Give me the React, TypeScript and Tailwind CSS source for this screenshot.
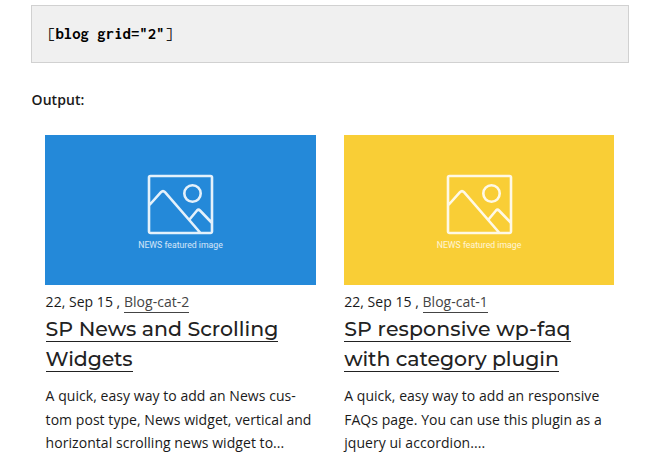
type Line = { text: string; tracking: string };

type Post = {
  background: string;
  width: string;
  indent: string;
  category: string;
  title: Line[];
  excerpt: Line[];
};

const posts: Post[] = [
  {
    background: "bg-[#2489d9]",
    width: "w-[271px]",
    indent: "pl-[0.6px]",
    category: "Blog-cat-2",
    title: [
      { text: "SP News and Scrolling", tracking: "tracking-[0px]" },
      { text: "Widgets", tracking: "tracking-[-0.15px]" },
    ],
    excerpt: [
      { text: "A quick, easy way to add an News cus-", tracking: "tracking-[0.05px]" },
      { text: "tom post type, News widget, vertical and", tracking: "tracking-[0.05px]" },
      { text: "horizontal scrolling news widget to...", tracking: "tracking-[0.05px]" },
    ],
  },
  {
    background: "bg-[#f9ce36]",
    width: "w-[270px]",
    indent: "pl-[0.2px]",
    category: "Blog-cat-1",
    title: [
      { text: "SP responsive wp-faq", tracking: "tracking-[0.13px]" },
      { text: "with category plugin", tracking: "tracking-[-0.1px]" },
    ],
    excerpt: [
      { text: "A quick, easy way to add an responsive", tracking: "tracking-[0.05px]" },
      { text: "FAQs page. You can use this plugin as a", tracking: "tracking-[0.05px]" },
      { text: "jquery ui accordion....", tracking: "tracking-[0.05px]" },
    ],
  },
];

function FeaturedImage({ background }: { background: string }) {
  return (
    <div className={`flex h-[150px] flex-col items-center pt-[39px] ${background}`}>
      <svg
        className="h-[62px] w-[67px] shrink-0"
        viewBox="0 0 67 62"
        fill="none"
        stroke="white"
        strokeOpacity="0.88"
        strokeWidth="2.6"
        strokeLinejoin="round"
      >
        <path d="M3.5 2H63.5a1.5 1.5 0 0 1 1.5 1.5V57.5a1.5 1.5 0 0 1-1.5 1.5H3.5A1.5 1.5 0 0 1 2 57.5V3.5A1.5 1.5 0 0 1 3.5 2ZM2 31.5 14 18.2Q16 16 18 18.2L53.5 59M42.5 45.5 50 36.5Q51.5 35 53 36.5L65 49" />
        <circle cx="45.5" cy="19.5" r="8.2" />
      </svg>
      <span className="mt-[2px] font-['Roboto',sans-serif] text-[8.7px] leading-[14px] whitespace-nowrap text-white/80">
        NEWS featured image
      </span>
    </div>
  );
}

function PostCard({ post }: { post: Post }) {
  return (
    <article className={post.width}>
      <FeaturedImage background={post.background} />
      <div className={`mt-[7px] flex h-[20px] text-[14px] leading-[20px] tracking-[0.03px] whitespace-pre text-[#1a1a1a] ${post.indent}`}>
        <span>22, Sep 15 , </span>
        <a className="h-[21px] border-b border-[#444] text-[#444]">{post.category}</a>
      </div>
      <h2 className={`mt-[4px] flex flex-col items-start gap-[4px] font-['Montserrat','Inter',sans-serif] text-[20.5px] leading-[26px] font-[540] text-[#222] ${post.indent}`}>
        {post.title.map((line) => (
          <span key={line.text} className={`h-[26px] border-b border-[#222] whitespace-nowrap ${line.tracking}`}>
            {line.text}
          </span>
        ))}
      </h2>
      <p className={`mt-[12px] flex flex-col items-start text-[14px] leading-[23.5px] text-[#1a1a1a] ${post.indent}`}>
        {post.excerpt.map((line) => (
          <span key={line.text} className={`whitespace-nowrap ${line.tracking}`}>
            {line.text}
          </span>
        ))}
      </p>
    </article>
  );
}

export default function App() {
  return (
    <main className="h-[457px] w-[653px] overflow-hidden bg-white pt-[5px] pl-[31px] font-['Open_Sans',sans-serif]">
      <pre className="flex h-[58px] w-[598px] items-center border border-[#d1d1d1] bg-[#f0f0f0] pl-[15px] font-['Inconsolata','Liberation_Mono',monospace] text-[16.8px] text-[#1a1a1a]">
        [<b className="text-black">blog grid="2"</b>]
      </pre>
      <h3 className="mt-[27px] pl-[0.6px] text-[14px] leading-[20px] font-semibold tracking-[0.05px] text-[#1a1a1a]">Output:</h3>
      <div className="mt-[25px] ml-[14px] flex gap-[28px]">
        {posts.map((post) => (
          <PostCard key={post.category} post={post} />
        ))}
      </div>
    </main>
  );
}
